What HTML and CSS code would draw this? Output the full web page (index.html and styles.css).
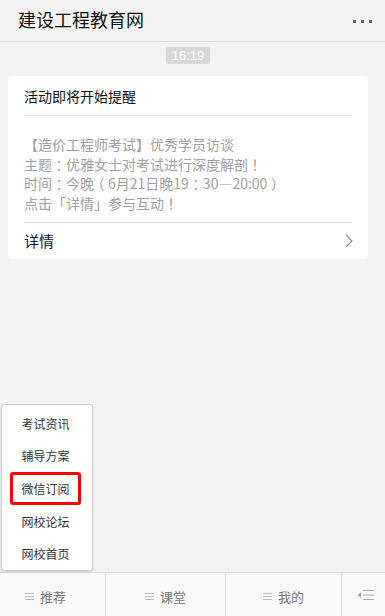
FILE: index.html
```html
<!DOCTYPE html>
<html lang="zh-CN">
<head>
<meta charset="utf-8">
<link rel="stylesheet" href="styles.css">
</head>
<body>
<div class="page">
  <header class="topbar">
    <h1 class="title">建设工程教育网</h1>
    <div class="dots"><span></span><span></span><span></span></div>
  </header>
  <main class="chat">
    <div class="time-wrap"><span class="time">16:19</span></div>
    <section class="card">
      <div class="card-head">活动即将开始提醒</div>
      <div class="card-body">
        <p>【造价工程师考试】优秀学员访谈</p>
        <p>主题<span class="pc">：</span>优雅女士对考试进行深度解剖<span class="pc">！</span></p>
        <p>时间<span class="pc">：</span>今晚<span class="pc">（</span>6月21日晚19<span class="pc">：</span>30—20:00<span class="pc">）</span></p>
        <p>点击「详情」参与互动<span class="pc">！</span></p>
      </div>
      <div class="card-foot">
        <span>详情</span>
        <svg class="chev" width="8" height="14" viewBox="0 0 8 14"><path d="M1 1 L7 7 L1 13" fill="none" stroke="#8a8a8a" stroke-width="1.2"/></svg>
      </div>
    </section>
  </main>
  <nav class="tabbar">
    <div class="tab first"><span class="ham"></span>推荐</div>
    <div class="tab"><span class="ham"></span>课堂</div>
    <div class="tab"><span class="ham"></span>我的</div>
    <div class="tab kb">
      <svg width="18" height="12" viewBox="0 0 18 12"><path d="M4 3 L0.5 6 L4 9 Z" fill="#aaa"/><path d="M6 1.5 H17 M6 6 H17 M6 10.5 H17" stroke="#aaa" stroke-width="1.2"/></svg>
    </div>
  </nav>
  <div class="menu">
    <div class="menu-item">考试资讯</div>
    <div class="menu-item">辅导方案</div>
    <div class="menu-item active">微信订阅</div>
    <div class="menu-item">网校论坛</div>
    <div class="menu-item">网校首页</div>
  </div>
</div>
</body>
</html>
```
FILE: styles.css
```css
* { box-sizing: border-box; }
html, body { margin: 0; padding: 0; }
body {
  font-family: "Noto Sans CJK SC", "Liberation Sans", sans-serif;
  background: #f3f3f3;
  text-spacing-trim: space-all;
}
.page {
  position: relative;
  width: 385px;
  height: 616px;
  display: flex;
  flex-direction: column;
  overflow: hidden;
}
.topbar {
  height: 42px;
  border-bottom: 1px solid #dedede;
  display: flex;
  align-items: center;
  justify-content: space-between;
  padding: 0 13px 0 18px;
  flex: none;
}
.title {
  margin: 0;
  font-size: 18px;
  font-weight: normal;
  color: #111;
  line-height: 1;
  padding-bottom: 4px;
}
.dots { display: flex; gap: 5px; padding-top: 2px; }
.dots span { width: 3px; height: 3px; background: #666; display: block; }
.chat { flex: 1; padding-right: 9px; }
.time-wrap { display: flex; justify-content: center; padding-top: 5px; }
.time {
  background: #d8d8d8;
  color: #fff;
  font-family: "Liberation Sans", sans-serif;
  font-size: 13px;
  line-height: 17px;
  padding: 0 6px;
  border-radius: 2px;
}
.card {
  margin: 12px 8px 0 8px;
  background: #fff;
  border-radius: 3px;
  padding: 0 16px;
}
.card-head {
  height: 40px;
  display: flex;
  align-items: center;
  font-size: 14px;
  color: #111;
  border-bottom: 1px solid #e6e6e6;
  padding-top: 1px;
}
.card-body {
  padding: 19px 0 8px;
  border-bottom: 1px solid #e6e6e6;
}
.card-body p {
  margin: 0;
  font-size: 14px;
  line-height: 19.7px;
  color: #a0a0a0;
  white-space: nowrap;
}
.pc {
  display: inline-block;
  width: 1em;
  text-align: center;
  font-feature-settings: "halt";
}
.card-foot {
  height: 36px;
  display: flex;
  align-items: center;
  justify-content: space-between;
  font-size: 15px;
  color: #111;
}
.chev { margin-right: -1px; }
.tabbar {
  height: 44px;
  flex: none;
  border-top: 1px solid #dcdcdc;
  background: #f8f8f8;
  display: grid;
  grid-template-columns: 106px 120px 116px 1fr;
}
.tab {
  display: flex;
  align-items: center;
  justify-content: center;
  font-size: 13px;
  color: #777;
  border-right: 1px solid #e0e0e0;
  padding-top: 3px;
}
.tab.first { padding-right: 14px; }
.tab:last-child { border-right: none; }
.ham {
  width: 9px;
  height: 7px;
  margin-right: 6px;
  border-top: 1px solid #bbb;
  border-bottom: 1px solid #bbb;
  position: relative;
}
.ham::after {
  content: "";
  position: absolute;
  left: 0; right: 0; top: 2px;
  border-top: 1px solid #bbb;
}
.kb { justify-content: center; padding-left: 4px; padding-top: 0; }
.menu {
  position: absolute;
  left: 1px;
  top: 404px;
  width: 92px;
  height: 167px;
  background: #fff;
  border: 1px solid #cfcfcf;
  border-radius: 3px;
  box-shadow: 0 1px 2px rgba(0,0,0,0.15);
  padding: 2px 0 0 8px;
  display: flex;
  flex-direction: column;
  align-items: flex-start;
}
.menu-item {
  height: 32.8px;
  display: flex;
  align-items: center;
  justify-content: center;
  font-size: 12px;
  color: #333;
  width: 71px;
}
.menu-item.active {
  border: 3px solid #ff0000;
  border-radius: 3px;
}
```
